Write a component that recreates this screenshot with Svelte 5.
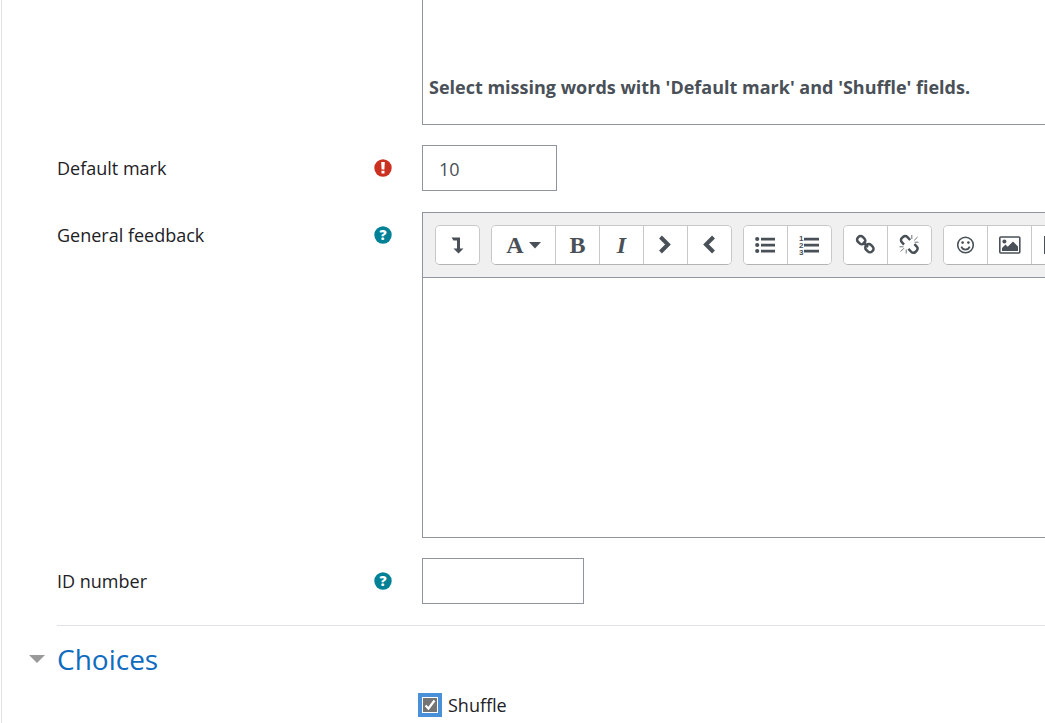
<script lang="ts">
	let question = $state("Select missing words with 'Default mark' and 'Shuffle' fields.");
	let mark = $state('10');
	let feedback = $state('');
	let idNumber = $state('');
	let shuffle = $state(true);
	let open = $state(true);

	const groups = [
		[{ icon: 'expand', label: 'Show more buttons' }],
		[
			{ icon: 'style', label: 'Paragraph styles' },
			{ icon: 'bold', label: 'Bold' },
			{ icon: 'italic', label: 'Italic' },
			{ icon: 'right', label: 'Left to right' },
			{ icon: 'left', label: 'Right to left' }
		],
		[
			{ icon: 'list', label: 'Unordered list' },
			{ icon: 'numbers', label: 'Ordered list' }
		],
		[
			{ icon: 'link', label: 'Link' },
			{ icon: 'unlink', label: 'Unlink' }
		],
		[
			{ icon: 'emoji', label: 'Emoji picker' },
			{ icon: 'image', label: 'Insert image' },
			{ icon: 'media', label: 'Insert media' }
		]
	];
</script>

{#snippet help(label: string)}
	<button class="help" aria-label={label}>
		<svg width="18" height="18" viewBox="0 0 18 18">
			<circle cx="9" cy="9" r="8.7" fill="#008196" />
			<text x="9" y="14" text-anchor="middle" class="mark">?</text>
		</svg>
	</button>
{/snippet}

{#snippet glyph(name: string)}
	{#if name === 'style'}
		<span class="letter">A</span>
		<svg width="12" height="7" viewBox="0 0 12 7"><path d="M0 0h12L6 6.5z" /></svg>
	{:else if name === 'bold'}
		<span class="letter">B</span>
	{:else if name === 'italic'}
		<span class="letter italic">I</span>
	{:else}
		<svg width="22" height="22" viewBox="0 0 22 22">
			{#if name === 'expand'}
				<path d="M4.5 3.5h8.5v11h3.5l-5 5-5-5H10V6.5H6.5z" />
			{:else if name === 'right'}
				<path d="M5.5 3l7.5 7.5L5.5 18" class="chevron" />
			{:else if name === 'left'}
				<path d="M14.5 3L7 10.5l7.5 7.5" class="chevron" />
			{:else if name === 'list'}
				<circle cx="2.2" cy="5" r="2.1" />
				<circle cx="2.2" cy="11" r="2.1" />
				<circle cx="2.2" cy="17" r="2.1" />
				<path d="M6 3.8h14v2.6H6zM6 9.8h14v2.6H6zM6 15.8h14v2.6H6z" />
			{:else if name === 'numbers'}
				<text x="0" y="7" class="digit">1</text>
				<text x="0" y="14" class="digit">2</text>
				<text x="0" y="21" class="digit">3</text>
				<path d="M5 3.8h15v2.6H5zM5 9.8h15v2.6H5zM5 15.8h15v2.6H5z" />
			{:else if name === 'link'}
				<g class="chain">
					<rect x="-4.2" y="-3.4" width="8.4" height="6.8" rx="3" transform="translate(6.2 6.2) rotate(45)" />
					<rect x="-4.2" y="-3.4" width="8.4" height="6.8" rx="3" transform="translate(14.4 14.2) rotate(45)" />
					<path d="M8 8l5 5" />
				</g>
			{:else if name === 'unlink'}
				<g class="chain">
					<path d="M5 10.6L2.8 8.2a2.8 2.8 0 0 1 0-4L4.2 2.8a2.8 2.8 0 0 1 4 0l3 3.2" />
					<path d="M15.4 10.2l2.4 2.4a2.8 2.8 0 0 1 0 4l-1.4 1.4a2.8 2.8 0 0 1-4 0l-3-3.2" />
				</g>
				<path d="M12.8 1v4M18.6 3l-3.4 3.4M19.5 8.2h-4M7.2 19.5v-4M1.6 17.6L5 14.2M.5 12.8h4" class="ray" />
			{:else if name === 'emoji'}
				<circle cx="10.5" cy="11" r="7.8" class="thin" />
				<circle cx="7.6" cy="8.6" r="1.3" />
				<circle cx="13.4" cy="8.6" r="1.3" />
				<path d="M6.3 12.6c1.6 4 6.8 4 8.4 0" class="thin" />
			{:else if name === 'image'}
				<rect x="0.8" y="3" width="20" height="16" rx="1" class="thin" />
				<circle cx="5.4" cy="7.6" r="2" />
				<path d="M3 17v-3l3.5-3.5 2.2 2.2L14 7.5l5 5V17z" />
			{:else}
				<path d="M1 2h20v18H1zM6 5v5h10V5zM6 12v5h10v-5z" fill-rule="evenodd" />
			{/if}
		</svg>
	{/if}
{/snippet}

<main>
	<div class="row">
		<div class="field">
			<div class="editor first">
				<textarea class="question" aria-label="Question text" bind:value={question}></textarea>
			</div>
		</div>
	</div>

	<div class="row">
		<label for="mark">Default mark</label>
		<div class="addon">
			<svg width="18" height="18" viewBox="0 0 18 18" role="img" aria-label="Required">
				<circle cx="9" cy="9" r="8.7" fill="#ca3120" />
				<path d="M7.2 3h3.6l-.4 7.5H7.6zM7.5 11.8h3v2.8h-3z" fill="#fff" />
			</svg>
		</div>
		<div class="field">
			<input id="mark" class="short" type="text" bind:value={mark} />
		</div>
	</div>

	<div class="row">
		<label for="feedback">General feedback</label>
		<div class="addon">{@render help('Help with General feedback')}</div>
		<div class="field">
			<div class="editor">
				<div class="toolbar" role="toolbar" aria-label="Editor">
					{#each groups as group}
						<div class="group">
							{#each group as button}
								<button class:wide={button.icon === 'style'} aria-label={button.label}>
									{@render glyph(button.icon)}
								</button>
							{/each}
						</div>
					{/each}
				</div>
				<textarea id="feedback" class="feedback" bind:value={feedback}></textarea>
			</div>
		</div>
	</div>

	<div class="row">
		<label for="idnumber">ID number</label>
		<div class="addon">{@render help('Help with ID number')}</div>
		<div class="field">
			<input id="idnumber" type="text" bind:value={idNumber} />
		</div>
	</div>

	<section>
		<h3>
			<button class="toggle" aria-expanded={open} onclick={() => (open = !open)}>
				<svg class:closed={!open} width="16" height="8" viewBox="0 0 16 8"><path d="M0 0h16L8 8z" /></svg>
				Choices
			</button>
		</h3>
		{#if open}
			<div class="row">
				<label class="check">
					<input type="checkbox" bind:checked={shuffle} />
					Shuffle
				</label>
			</div>
		{/if}
	</section>
</main>

<style>
	:global(body) {
		background: #fff;
		overflow-x: hidden;
	}

	main {
		display: flex;
		flex-direction: column;
		gap: 20px;
		box-sizing: border-box;
		min-height: 100vh;
		margin-left: 1px;
		padding-left: 55px;
		border-left: 1px solid #dee2e6;
		font-family: 'Segoe UI', 'Open Sans', sans-serif;
		font-size: 18px;
		line-height: 28px;
		color: #1d2125;
	}

	.row {
		display: grid;
		grid-template-columns: 317px 48px minmax(0, 1fr);
	}

	.row > label {
		padding-top: 9px;
	}

	.addon {
		padding-top: 14px;
	}

	.addon svg {
		display: block;
		overflow: visible;
	}

	.field {
		grid-column: 3;
		min-height: 47px;
	}

	.help {
		display: block;
		padding: 0;
		border: none;
		background: none;
		cursor: pointer;
	}

	.mark {
		fill: #fff;
		font-family: 'Open Sans', sans-serif;
		font-size: 14px;
		font-weight: 800;
	}

	input[type='text'] {
		display: block;
		box-sizing: border-box;
		width: 162px;
		height: 46px;
		padding: 2px 16px 0;
		border: 1px solid #8f959e;
		background: #fff;
		font: inherit;
		color: #495057;
	}

	input.short {
		width: 135px;
	}

	.editor {
		border: 1px solid #8f959e;
		border-right: none;
	}

	.editor.first {
		border-top: none;
	}

	textarea {
		display: block;
		box-sizing: border-box;
		width: 100%;
		padding: 6px;
		border: none;
		outline: none;
		resize: none;
		background: #fff;
		font: inherit;
		color: #495057;
	}

	.question {
		height: 124px;
		padding-top: 73px;
		font-weight: 700;
	}

	.feedback {
		height: 259px;
	}

	.toolbar {
		display: flex;
		gap: 11px;
		padding: 12px;
		border-bottom: 1px solid #8f959e;
		background: #f0f0f0;
		overflow: hidden;
	}

	.group {
		display: flex;
		flex-shrink: 0;
		border: 1px solid #c8c8c8;
		border-bottom-color: #b3b3b3;
		border-radius: 5px;
		background: #fff;
		overflow: hidden;
	}

	.group button {
		display: flex;
		align-items: center;
		justify-content: center;
		gap: 5px;
		box-sizing: border-box;
		width: 44px;
		height: 38px;
		padding: 0;
		border: none;
		border-right: 1px solid #c8c8c8;
		background: #fff;
		color: #495057;
		fill: #495057;
		cursor: pointer;
	}

	.group button:last-child {
		width: 43px;
		border-right: none;
	}

	.group button.wide {
		width: 64px;
	}

	.letter {
		font-family: 'Liberation Serif', serif;
		font-size: 24px;
		font-weight: 700;
		line-height: 24px;
	}

	.italic {
		font-style: italic;
	}

	.digit {
		font-family: 'Liberation Sans', sans-serif;
		font-size: 8px;
		font-weight: 700;
	}

	.chevron {
		fill: none;
		stroke: #495057;
		stroke-width: 4;
	}

	.chain {
		fill: none;
		stroke: #495057;
		stroke-width: 2.5;
	}

	.ray {
		stroke: #495057;
		stroke-width: 0.8;
	}

	.thin {
		fill: none;
		stroke: #495057;
		stroke-width: 1.6;
	}

	section {
		border-top: 1px solid #dee2e6;
	}

	h3 {
		margin: 11px 0 10px -28px;
		font-size: 28px;
		font-weight: 400;
		line-height: 44px;
	}

	.toggle {
		display: flex;
		align-items: center;
		gap: 12px;
		padding: 0;
		border: none;
		background: none;
		font: inherit;
		color: #0f6cbf;
		cursor: pointer;
	}

	.toggle svg {
		fill: #999;
	}

	.toggle .closed {
		transform: rotate(-90deg);
	}

	.row > .check {
		grid-column: 3;
		display: flex;
		align-items: center;
		gap: 10px;
		padding: 0;
	}

	.check input {
		appearance: none;
		width: 16px;
		height: 16px;
		margin: 0;
		border: 1px solid #fff;
		background: #757575;
		outline: 4px solid #4a90d9;
	}

	.check input:checked {
		background: #757575
			url("data:image/svg+xml,%3Csvg xmlns='http://www.w3.org/2000/svg' viewBox='0 0 14 14'%3E%3Cpath d='M2.5 7.5l3 3 6-8' fill='none' stroke='white' stroke-width='2.2'/%3E%3C/svg%3E");
	}
</style>
